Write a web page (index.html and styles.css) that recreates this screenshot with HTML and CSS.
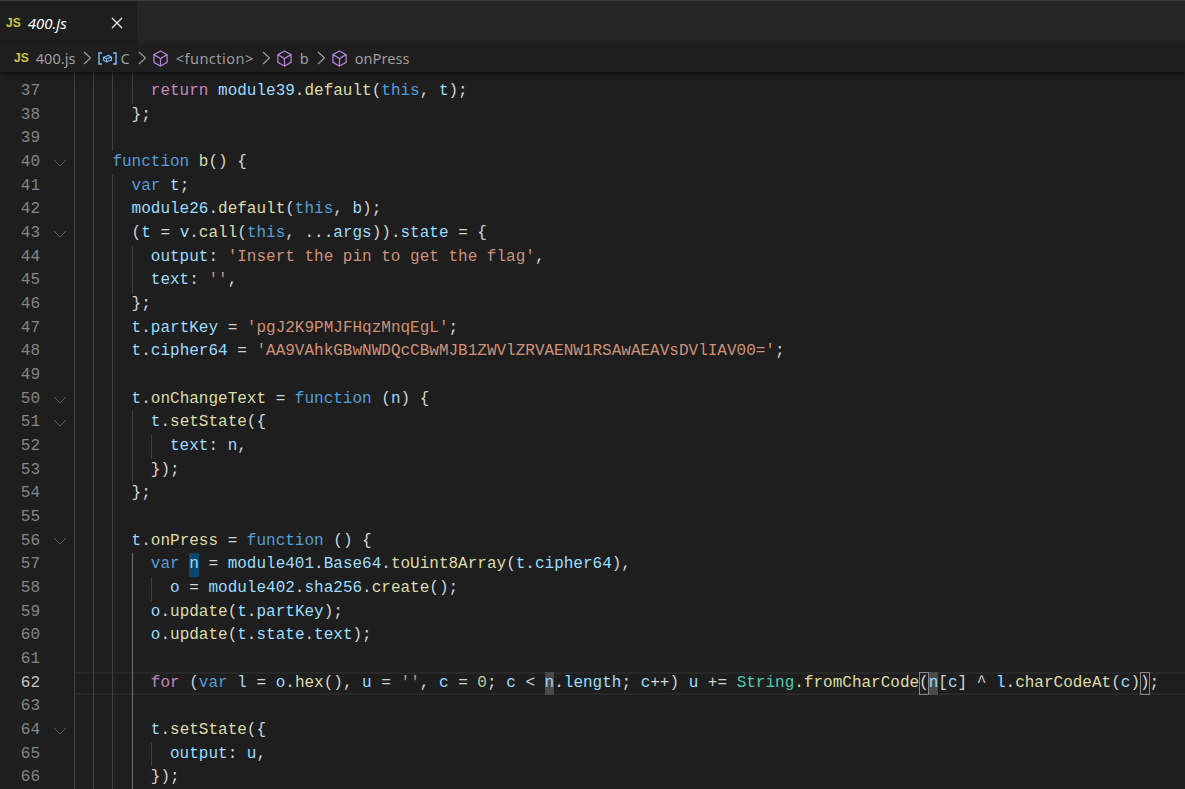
FILE: index.html
```html
<!DOCTYPE html>
<html lang="en">
<head>
  <meta charset="UTF-8" />
  <title>400.js</title>
  <link rel="stylesheet" href="styles.css">
</head>
<body>
  <svg class="defs" width="0" height="0">
    <symbol id="cube" viewBox="0 0 16 16">
      <path d="M8 1 14.2 4.4V11.6L8 15 1.8 11.6V4.4Z M1.8 4.4 8 8 14.2 4.4 M8 8V15" fill="none" stroke="currentColor" stroke-width="1.2" />
    </symbol>
    <symbol id="fold" viewBox="0 0 14 14">
      <path d="M1 4 7 10 13 4" fill="none" stroke="currentColor" stroke-width="1" />
    </symbol>
    <symbol id="chev" viewBox="0 0 10 16">
      <path d="M2 2 8.5 8 2 14" fill="none" stroke="currentColor" stroke-width="1.1" />
    </symbol>
  </svg>

  <div class="tabs">
    <div class="tab">
      <span class="js-icon">JS</span>
      <span class="tab-name">400.js</span>
      <svg class="close" viewBox="0 0 12 12"><path d="M1 1 11 11M11 1 1 11" fill="none" stroke="currentColor" stroke-width="1.3" /></svg>
    </div>
  </div>

  <div class="crumbs">
    <span class="js-icon">JS</span>
    <span class="crumb-name">400.js</span>
    <svg class="sep"><use href="#chev" /></svg>
    <svg class="var-icon" viewBox="0 0 19 13">
      <path d="M4 1H1V12H4M15 1H18V12H15" fill="none" stroke="currentColor" stroke-width="1.4" />
      <path d="M5.5 5.2 10.5 3.4 13.5 5 13.5 8 8.5 9.8 5.5 8.2ZM5.5 5.2 8.5 6.8 13.5 5M8.5 6.8V9.8" fill="none" stroke="currentColor" stroke-width="1.1" />
    </svg>
    <span class="crumb-name var-name">C</span>
    <svg class="sep"><use href="#chev" /></svg>
    <svg class="cube"><use href="#cube" /></svg>
    <span class="crumb-name fn-name">&lt;function&gt;</span>
    <svg class="sep"><use href="#chev" /></svg>
    <svg class="cube"><use href="#cube" /></svg>
    <span class="crumb-name">b</span>
    <svg class="sep"><use href="#chev" /></svg>
    <svg class="cube"><use href="#cube" /></svg>
    <span class="crumb-name">onPress</span>
  </div>

  <div class="editor">
    <div class="lines">
      <div class="line"><div class="gutter"><span class="num"></span><span class="fold"></span></div><div class="code"><i></i><i></i><i></i><i></i></div></div>
      <div class="line"><div class="gutter"><span class="num">37</span><span class="fold"></span></div><div class="code"><i></i><i></i><i></i><i></i><pre><b class="c">return</b> <b class="v">module39</b>.<b class="f">default</b>(<b class="k">this</b>, <b class="v">t</b>);</pre></div></div>
      <div class="line"><div class="gutter"><span class="num">38</span><span class="fold"></span></div><div class="code"><i></i><i></i><i></i><pre>};</pre></div></div>
      <div class="line"><div class="gutter"><span class="num">39</span><span class="fold"></span></div><div class="code"><i></i><i></i><i></i></div></div>
      <div class="line"><div class="gutter"><span class="num">40</span><span class="fold"><svg><use href="#fold" /></svg></span></div><div class="code"><i></i><i></i><pre><b class="k">function</b> <b class="f">b</b>() {</pre></div></div>
      <div class="line"><div class="gutter"><span class="num">41</span><span class="fold"></span></div><div class="code"><i></i><i></i><i></i><pre><b class="k">var</b> <b class="v">t</b>;</pre></div></div>
      <div class="line"><div class="gutter"><span class="num">42</span><span class="fold"></span></div><div class="code"><i></i><i></i><i></i><pre><b class="v">module26</b>.<b class="f">default</b>(<b class="k">this</b>, <b class="v">b</b>);</pre></div></div>
      <div class="line"><div class="gutter"><span class="num">43</span><span class="fold"><svg><use href="#fold" /></svg></span></div><div class="code"><i></i><i></i><i></i><pre>(<b class="v">t</b> = <b class="v">v</b>.<b class="f">call</b>(<b class="k">this</b>, ...<b class="v">args</b>)).<b class="v">state</b> = {</pre></div></div>
      <div class="line"><div class="gutter"><span class="num">44</span><span class="fold"></span></div><div class="code"><i></i><i></i><i></i><i></i><pre><b class="v">output</b>: <b class="s">'Insert the pin to get the flag'</b>,</pre></div></div>
      <div class="line"><div class="gutter"><span class="num">45</span><span class="fold"></span></div><div class="code"><i></i><i></i><i></i><i></i><pre><b class="v">text</b>: <b class="s">''</b>,</pre></div></div>
      <div class="line"><div class="gutter"><span class="num">46</span><span class="fold"></span></div><div class="code"><i></i><i></i><i></i><pre>};</pre></div></div>
      <div class="line"><div class="gutter"><span class="num">47</span><span class="fold"></span></div><div class="code"><i></i><i></i><i></i><pre><b class="v">t</b>.<b class="v">partKey</b> = <b class="s">'pgJ2K9PMJFHqzMnqEgL'</b>;</pre></div></div>
      <div class="line"><div class="gutter"><span class="num">48</span><span class="fold"></span></div><div class="code"><i></i><i></i><i></i><pre><b class="v">t</b>.<b class="v">cipher64</b> = <b class="s">'AA9VAhkGBwNWDQcCBwMJB1ZWVlZRVAENW1RSAwAEAVsDVlIAV00='</b>;</pre></div></div>
      <div class="line"><div class="gutter"><span class="num">49</span><span class="fold"></span></div><div class="code"><i></i><i></i><i></i></div></div>
      <div class="line"><div class="gutter"><span class="num">50</span><span class="fold"><svg><use href="#fold" /></svg></span></div><div class="code"><i></i><i></i><i></i><pre><b class="v">t</b>.<b class="f">onChangeText</b> = <b class="k">function</b> (<b class="v">n</b>) {</pre></div></div>
      <div class="line"><div class="gutter"><span class="num">51</span><span class="fold"><svg><use href="#fold" /></svg></span></div><div class="code"><i></i><i></i><i></i><i></i><pre><b class="v">t</b>.<b class="f">setState</b>({</pre></div></div>
      <div class="line"><div class="gutter"><span class="num">52</span><span class="fold"></span></div><div class="code"><i></i><i></i><i></i><i></i><i></i><pre><b class="v">text</b>: <b class="v">n</b>,</pre></div></div>
      <div class="line"><div class="gutter"><span class="num">53</span><span class="fold"></span></div><div class="code"><i></i><i></i><i></i><i></i><pre>});</pre></div></div>
      <div class="line"><div class="gutter"><span class="num">54</span><span class="fold"></span></div><div class="code"><i></i><i></i><i></i><pre>};</pre></div></div>
      <div class="line"><div class="gutter"><span class="num">55</span><span class="fold"></span></div><div class="code"><i></i><i></i><i></i></div></div>
      <div class="line"><div class="gutter"><span class="num">56</span><span class="fold"><svg><use href="#fold" /></svg></span></div><div class="code"><i></i><i></i><i></i><pre><b class="v">t</b>.<b class="f">onPress</b> = <b class="k">function</b> () {</pre></div></div>
      <div class="line"><div class="gutter"><span class="num">57</span><span class="fold"></span></div><div class="code"><i></i><i></i><i></i><i class="on"></i><pre><b class="k">var</b> <b class="v sel">n</b> = <b class="v">module401</b>.<b class="v">Base64</b>.<b class="f">toUint8Array</b>(<b class="v">t</b>.<b class="v">cipher64</b>),</pre></div></div>
      <div class="line"><div class="gutter"><span class="num">58</span><span class="fold"></span></div><div class="code"><i></i><i></i><i></i><i class="on"></i><i></i><pre><b class="v">o</b> = <b class="v">module402</b>.<b class="v">sha256</b>.<b class="f">create</b>();</pre></div></div>
      <div class="line"><div class="gutter"><span class="num">59</span><span class="fold"></span></div><div class="code"><i></i><i></i><i></i><i class="on"></i><pre><b class="v">o</b>.<b class="f">update</b>(<b class="v">t</b>.<b class="v">partKey</b>);</pre></div></div>
      <div class="line"><div class="gutter"><span class="num">60</span><span class="fold"></span></div><div class="code"><i></i><i></i><i></i><i class="on"></i><pre><b class="v">o</b>.<b class="f">update</b>(<b class="v">t</b>.<b class="v">state</b>.<b class="v">text</b>);</pre></div></div>
      <div class="line"><div class="gutter"><span class="num">61</span><span class="fold"></span></div><div class="code"><i></i><i></i><i></i><i class="on"></i></div></div>
      <div class="line current"><div class="gutter"><span class="num">62</span><span class="fold"></span></div><div class="code"><i></i><i></i><i></i><i class="on"></i><pre><b class="c">for</b> (<b class="k">var</b> <b class="v">l</b> = <b class="v">o</b>.<b class="f">hex</b>(), <b class="v">u</b> = <b class="s">''</b>, <b class="v">c</b> = <b class="n">0</b>; <b class="v">c</b> &lt; <b class="v word">n</b>.<b class="v">length</b>; <b class="v">c</b>++) <b class="v">u</b> += <b class="t">String</b>.<b class="f">fromCharCode</b><b class="match">(</b><b class="v word">n</b>[<b class="v">c</b>] ^ <b class="v">l</b>.<b class="f">charCodeAt</b>(<b class="v">c</b>)<b class="match">)</b>;</pre></div></div>
      <div class="line"><div class="gutter"><span class="num">63</span><span class="fold"></span></div><div class="code"><i></i><i></i><i></i><i class="on"></i></div></div>
      <div class="line"><div class="gutter"><span class="num">64</span><span class="fold"><svg><use href="#fold" /></svg></span></div><div class="code"><i></i><i></i><i></i><i class="on"></i><pre><b class="v">t</b>.<b class="f">setState</b>({</pre></div></div>
      <div class="line"><div class="gutter"><span class="num">65</span><span class="fold"></span></div><div class="code"><i></i><i></i><i></i><i class="on"></i><i></i><pre><b class="v">output</b>: <b class="v">u</b>,</pre></div></div>
      <div class="line"><div class="gutter"><span class="num">66</span><span class="fold"></span></div><div class="code"><i></i><i></i><i></i><i class="on"></i><pre>});</pre></div></div>
    </div>
  </div>
</body>
</html>
```

FILE: styles.css
```css
html, body {
  height: 100%;
}

body {
  margin: 0;
  background-color: #1e1e1e;
  color: #d4d4d4;
  overflow: hidden;
  display: flex;
  flex-direction: column;
}

.defs {
  position: absolute;
}

.tabs {
  height: 43px;
  flex: none;
  background-color: #252526;
  border-top: 1px solid #3c3c3c;
  display: flex;
}

.tab {
  width: 137px;
  background-color: #1e1e1e;
  display: flex;
  align-items: center;
  padding-left: 6px;
  box-sizing: border-box;
}

.js-icon {
  font-family: "Liberation Sans", sans-serif;
  font-size: 12px;
  font-weight: bold;
  color: #cbcb41;
}

.tab-name {
  font-family: "Noto Sans", sans-serif;
  font-size: 15px;
  font-style: italic;
  color: #ffffff;
  margin-left: 7px;
  width: 83px;
}

.close {
  width: 12px;
  height: 12px;
  color: #e8e8e8;
}

.crumbs {
  height: 28px;
  flex: none;
  background-color: #1e1e1e;
  box-shadow: 0 2px 5px rgba(0, 0, 0, 0.55);
  position: relative;
  z-index: 2;
  display: flex;
  align-items: center;
  padding-left: 14px;
  font-family: "Noto Sans", sans-serif;
  font-size: 14.6px;
  color: #9d9d9d;
}

.crumb-name {
  margin-left: 7px;
}

.fn-name {
  letter-spacing: 0.45px;
}

.sep {
  width: 10px;
  height: 16px;
  margin: 0 1px 0 7px;
  color: #a0a0a0;
}

.var-icon {
  width: 19px;
  height: 13px;
  margin-left: 5px;
  color: #75beff;
}

.var-name {
  margin-left: 3px;
}

.cube {
  width: 17px;
  height: 17px;
  margin-left: 4px;
  color: #b180d7;
}

.editor {
  flex: 1;
  overflow: hidden;
}

.lines {
  margin-top: -15.5px;
  font-family: "Liberation Mono", monospace;
  font-size: 16px;
  line-height: 23.66px;
}

.line {
  display: flex;
  height: 23.66px;
}

.gutter {
  width: 74px;
  flex: none;
  display: flex;
}

.num {
  width: 40px;
  text-align: right;
  color: #858585;
}

.fold {
  width: 34px;
  padding-left: 13px;
  box-sizing: border-box;
  color: #5f5f5f;
  display: flex;
  align-items: center;
}

.fold svg {
  width: 14px;
  height: 14px;
}

.code {
  flex: 1;
  display: flex;
}

.code i {
  width: 2ch;
  flex: none;
  box-shadow: inset 1px 0 0 #404040;
}

.code i.on {
  box-shadow: inset 1px 0 0 #707070;
}

pre {
  margin: 0;
  font: inherit;
}

b {
  font-weight: normal;
}

.k { color: #569cd6; }
.c { color: #c586c0; }
.v { color: #9cdcfe; }
.f { color: #dcdcaa; }
.s { color: #ce9178; }
.n { color: #b5cea8; }
.t { color: #4ec9b0; }

.sel, .word, .match {
  display: inline-block;
}

.sel {
  background-color: #094771;
}

.word {
  background-color: #4a4a4a;
}

.match {
  box-shadow: inset 0 0 0 1px #888888;
}

.current .num {
  color: #c6c6c6;
}

.current .code {
  box-shadow: inset 0 2px 0 #282828, inset 0 -2px 0 #282828;
}
```
